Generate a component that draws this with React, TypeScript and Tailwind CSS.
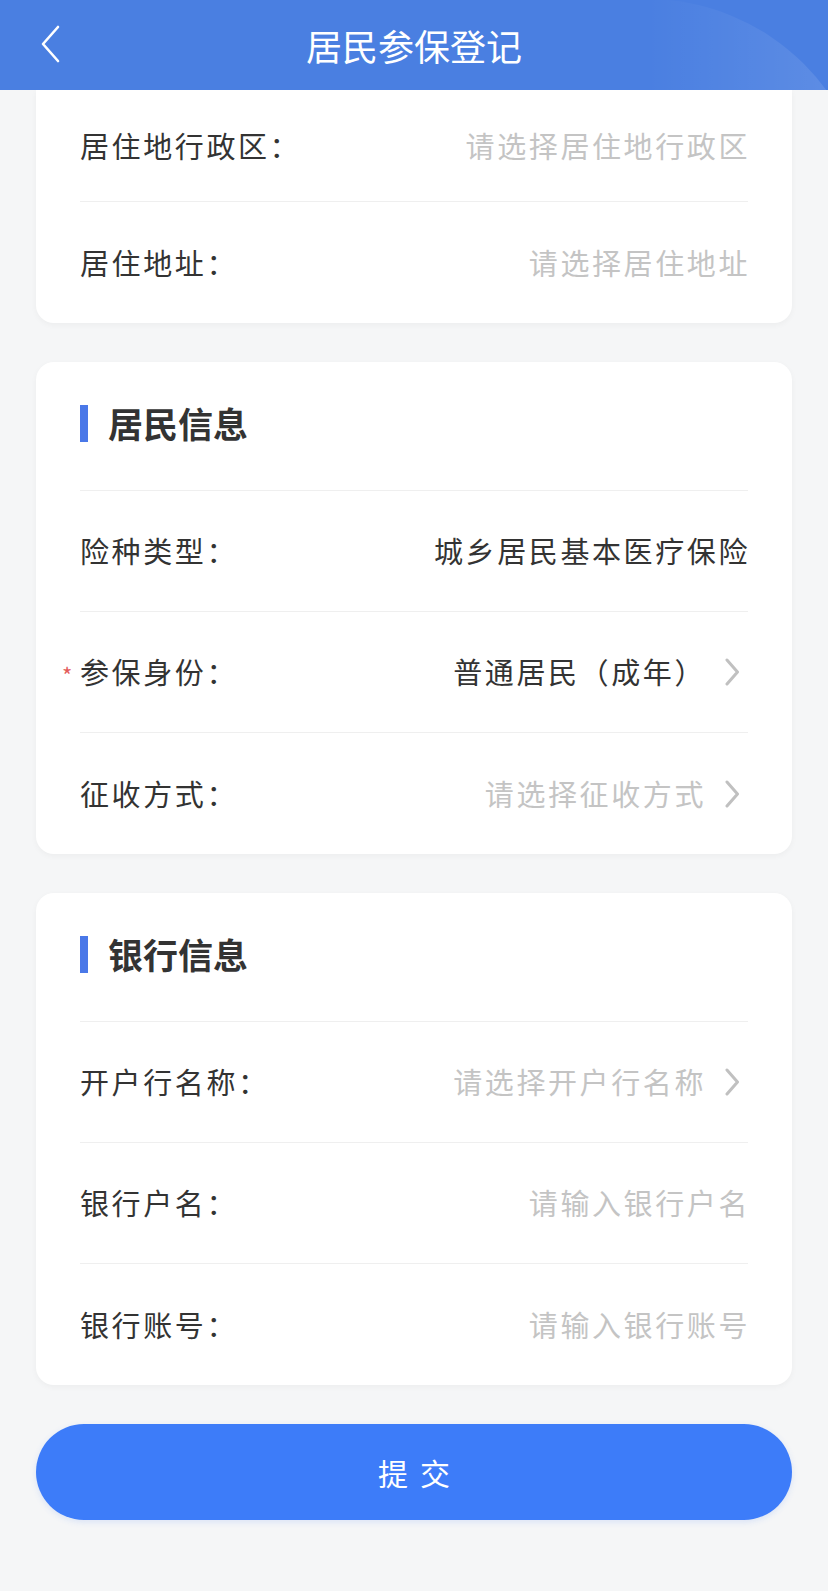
import React from "react";

const FONT = { fontFamily: '"Noto Sans CJK SC", "Noto Sans", sans-serif' };

interface RowProps {
	label: string;
	value: string;
	placeholder?: boolean;
	arrow?: boolean;
	required?: boolean;
	last?: boolean;
	short?: boolean;
}

function Chevron() {
	return (
		<svg width="16" height="28" viewBox="0 0 16 28" className="ml-[20px] mr-[8px] shrink-0">
			<path
				d="M3 2 L13.5 14 L3 26"
				fill="none"
				stroke="#c0c0c0"
				strokeWidth="3"
				strokeLinecap="round"
				strokeLinejoin="round"
			/>
		</svg>
	);
}

function Row({ label, value, placeholder, arrow, required, last, short }: RowProps) {
	return (
		<div
			className={`flex items-center justify-between ${short ? "h-[112px]" : "h-[121px]"} ${
				last ? "" : "border-b border-[#efefef]"
			}`}
		>
			<div className="relative text-[29px] tracking-[2.6px] text-[#333333]">
				{required && (
					<span className="absolute -left-[18px] top-[8px] text-[22px] text-[#e35b5b]">*</span>
				)}
				{label}
			</div>
			<div className="flex items-center">
				<span
					className={`mr-[-2px] text-[29px] tracking-[2.6px] ${
						placeholder ? "text-[#c4c4c4]" : "text-[#333333]"
					}`}
				>
					{value}
				</span>
				{arrow && <Chevron />}
			</div>
		</div>
	);
}

function SectionTitle({ title }: { title: string }) {
	return (
		<div className="flex h-[129px] items-center border-b border-[#efefef] pb-[6px]">
			<div className="h-[37px] w-[8px] bg-[#4a78e8]" />
			<div className="ml-[20px] text-[35px] font-bold text-[#333333]">{title}</div>
		</div>
	);
}

export default function App() {
	return (
		<div className="min-h-screen bg-[#f5f6f7] pb-[70px]" style={FONT}>
			{/* Header */}
			<div className="relative flex h-[90px] items-center justify-center overflow-hidden bg-[#4a7fe1]">
				{/* decorative arc */}
				<div className="absolute left-[425px] top-[-1px] h-[444px] w-[444px] rounded-full bg-[linear-gradient(to_right,rgba(255,255,255,0)_50%,rgba(255,255,255,0.13)_100%)]" />
				<svg
					width="24"
					height="40"
					viewBox="0 0 24 40"
					className="absolute left-[38px] top-[24px]"
				>
					<path
						d="M20 3 L5 20 L20 37"
						fill="none"
						stroke="#ffffff"
						strokeWidth="2.6"
						strokeLinecap="round"
						strokeLinejoin="round"
					/>
				</svg>
				<div className="relative text-[36px] text-white">居民参保登记</div>
			</div>

			<div className="flex flex-col gap-[39px] px-[36px]">
				{/* Address card */}
				<div className="rounded-b-[18px] bg-white px-[44px] shadow-[0_2px_6px_rgba(0,0,0,0.04)]">
					<Row label="居住地行政区：" value="请选择居住地行政区" placeholder short />
					<Row label="居住地址：" value="请选择居住地址" placeholder last />
				</div>

				{/* Resident info */}
				<div className="rounded-[18px] bg-white px-[44px] shadow-[0_2px_6px_rgba(0,0,0,0.04)]">
					<SectionTitle title="居民信息" />
					<Row label="险种类型：" value="城乡居民基本医疗保险" />
					<Row label="参保身份：" value="普通居民（成年）" arrow required />
					<Row label="征收方式：" value="请选择征收方式" placeholder arrow last />
				</div>

				{/* Bank info */}
				<div className="rounded-[18px] bg-white px-[44px] shadow-[0_2px_6px_rgba(0,0,0,0.04)]">
					<SectionTitle title="银行信息" />
					<Row label="开户行名称：" value="请选择开户行名称" placeholder arrow />
					<Row label="银行户名：" value="请输入银行户名" placeholder />
					<Row label="银行账号：" value="请输入银行账号" placeholder last />
				</div>

				<button className="flex h-[96px] items-center justify-center rounded-full bg-[#3d7cf9] text-[30px] tracking-[12px] text-white shadow-[0_2px_6px_rgba(61,124,249,0.15)]">
					<span className="pl-[12px]">提交</span>
				</button>
			</div>
		</div>
	);
}
